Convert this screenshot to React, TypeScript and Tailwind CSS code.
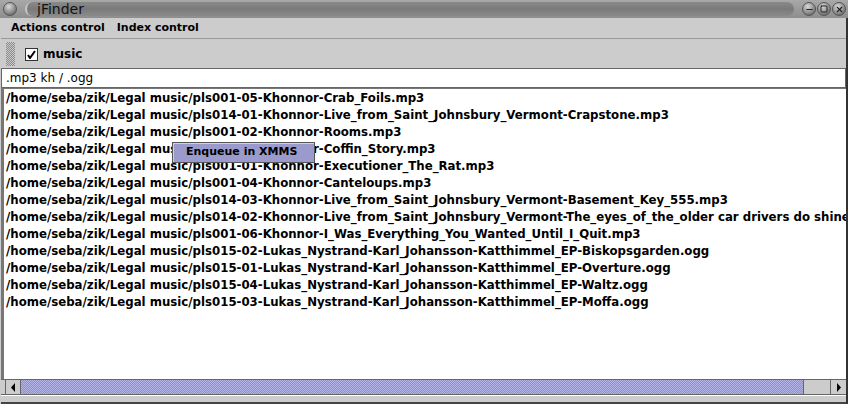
import { Minus, Square, X } from 'lucide-react'

const files = [
  '/home/seba/zik/Legal music/pls001-05-Khonnor-Crab_Foils.mp3',
  '/home/seba/zik/Legal music/pls014-01-Khonnor-Live_from_Saint_Johnsbury_Vermont-Crapstone.mp3',
  '/home/seba/zik/Legal music/pls001-02-Khonnor-Rooms.mp3',
  '/home/seba/zik/Legal music/pls001-03-Khonnor-Coffin_Story.mp3',
  '/home/seba/zik/Legal music/pls001-01-Khonnor-Executioner_The_Rat.mp3',
  '/home/seba/zik/Legal music/pls001-04-Khonnor-Canteloups.mp3',
  '/home/seba/zik/Legal music/pls014-03-Khonnor-Live_from_Saint_Johnsbury_Vermont-Basement_Key_555.mp3',
  '/home/seba/zik/Legal music/pls014-02-Khonnor-Live_from_Saint_Johnsbury_Vermont-The_eyes_of_the_older car drivers do shine.mp3',
  '/home/seba/zik/Legal music/pls001-06-Khonnor-I_Was_Everything_You_Wanted_Until_I_Quit.mp3',
  '/home/seba/zik/Legal music/pls015-02-Lukas_Nystrand-Karl_Johansson-Katthimmel_EP-Biskopsgarden.ogg',
  '/home/seba/zik/Legal music/pls015-01-Lukas_Nystrand-Karl_Johansson-Katthimmel_EP-Overture.ogg',
  '/home/seba/zik/Legal music/pls015-04-Lukas_Nystrand-Karl_Johansson-Katthimmel_EP-Waltz.ogg',
  '/home/seba/zik/Legal music/pls015-03-Lukas_Nystrand-Karl_Johansson-Katthimmel_EP-Moffa.ogg',
]

function Knob({ children }: { children?: React.ReactNode }) {
  return (
    <div className="flex h-[14px] w-[14px] items-center justify-center rounded-full border border-[#555] bg-[radial-gradient(circle_at_40%_30%,#d8d8d8,#7a7a7a_70%,#4a4a4a)] text-[#222]">
      {children}
    </div>
  )
}

export default function App() {
  return (
    <div className="relative flex h-[404px] w-[848px] flex-col overflow-hidden bg-[#cccccc] font-['DejaVu_Sans',sans-serif] text-black">
      {/* title bar */}
      <div className="flex h-[18px] shrink-0 items-center gap-[8px] bg-[linear-gradient(#a8a8a8,#8e8e8e)] pl-[3px] pr-[2px]">
        <Knob />
        <div className="flex h-[14px] flex-1 items-center rounded-full border-l-2 border-[#c8c8c8] bg-[linear-gradient(#8a8a8a,#7a7a7a_50%,#8a8a8a)] pl-[10px] text-[14px] leading-none text-[#111]">
          jFinder
        </div>
        <div className="flex gap-[1px]">
          <Knob><Minus size={9} strokeWidth={3} /></Knob>
          <Knob><Square size={8} strokeWidth={3} /></Knob>
          <Knob><X size={9} strokeWidth={3} /></Knob>
        </div>
      </div>

      <div className="flex flex-1 flex-col border-r-[2px] border-[#333] pl-[1px]">
        {/* menu bar */}
        <div className="flex h-[21px] shrink-0 items-center gap-[12px] border-b border-[#999] pl-[10px] text-[11px] font-bold">
          <span>Actions control</span>
          <span>Index control</span>
        </div>

        {/* toolbar */}
        <div className="flex h-[29px] shrink-0 items-center">
          <div className="ml-[5px] h-[24px] w-[9px] bg-[repeating-conic-gradient(#8a8a8a_0_25%,transparent_0_50%)] bg-[length:2px_2px]" />
          <div className="ml-[10px] mt-[1px] flex h-[13px] w-[13px] items-center justify-center border border-[#333] bg-white">
            <svg width="9" height="9" viewBox="0 0 9 9">
              <path d="M1 5 L3 8 L8 1" fill="none" stroke="#000" strokeWidth="2" />
            </svg>
          </div>
          <span className="ml-[5px] text-[12px] font-bold">music</span>
        </div>

        {/* search field */}
        <div className="flex h-[20px] shrink-0 items-center border border-[#666] bg-white pl-[4px] text-[12px]">
          .mp3 kh / .ogg
        </div>

        {/* result list */}
        <div className="flex flex-1 flex-col overflow-hidden border-l-[3px] border-t border-[#777] bg-white pt-[1px] text-[11.75px] font-bold">
          {files.map((f) => (
            <div key={f} className="h-[17px] shrink-0 whitespace-nowrap pl-[2px] leading-[17px]">
              {f}
            </div>
          ))}
        </div>

        {/* horizontal scrollbar */}
        <div className="flex h-[16px] shrink-0 border-y border-[#666] bg-[#cccccc] pl-[4px]">
          <div className="flex w-[16px] shrink-0 items-center justify-center border-x border-[#666] bg-[#cccccc]">
            <svg width="6" height="9" viewBox="0 0 6 9"><path d="M5 0 L1 4.5 L5 9 Z" fill="#000" /></svg>
          </div>
          <div className="flex-1 border-r border-[#666] bg-[repeating-conic-gradient(#b4b4e6_0_25%,#8e8ecc_0_50%)] bg-[length:2px_2px]" />
          <div className="w-[26px] shrink-0" />
          <div className="flex w-[16px] shrink-0 items-center justify-center border-l border-[#666]">
            <svg width="6" height="9" viewBox="0 0 6 9"><path d="M1 0 L5 4.5 L1 9 Z" fill="#000" /></svg>
          </div>
        </div>
        <div className="h-[9px] shrink-0 border-b-2 border-t border-b-[#444] border-t-[#fff] bg-[#cccccc]" />
      </div>

      {/* popup menu */}
      <div className="absolute left-[172px] top-[142px] flex h-[21px] w-[143px] items-center border border-[#555] bg-[#9a9acc] pl-[13px] text-[11px] font-bold shadow-[inset_1px_1px_0_#ccccff]">
        Enqueue in XMMS
      </div>
    </div>
  )
}
